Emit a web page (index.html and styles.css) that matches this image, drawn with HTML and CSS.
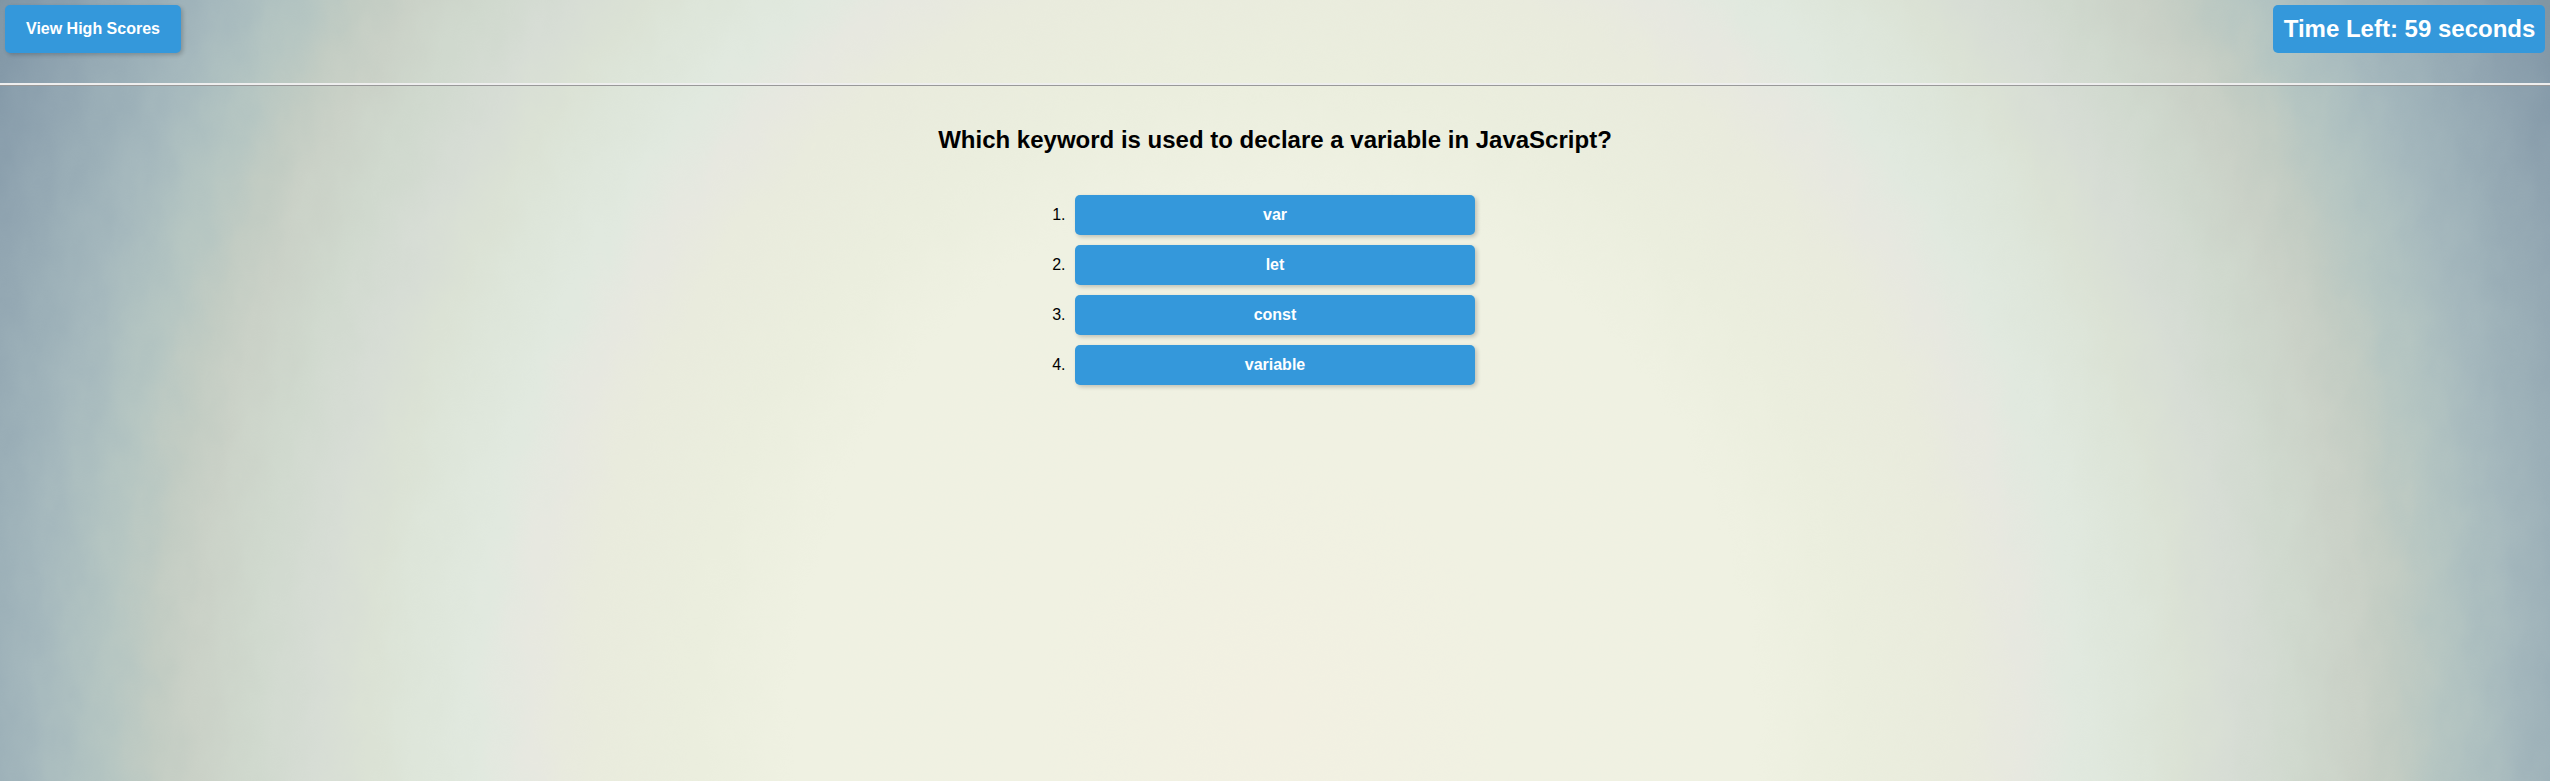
FILE: index.html
```html
<!DOCTYPE html>
<html lang="en">
<head>
<meta charset="utf-8">
<title>Code Quiz</title>
<link rel="stylesheet" href="styles.css">
</head>
<body>
<svg class="backdrop" width="2550" height="781" viewBox="0 0 2550 781" aria-hidden="true">
  <defs>
    <radialGradient id="vignette" gradientUnits="userSpaceOnUse" cx="0" cy="0" r="1450" gradientTransform="translate(1275 715) scale(1 1.1)">
      <stop offset="0" stop-color="#f2f0e2"/>
      <stop offset="0.17" stop-color="#f0f1e2"/>
      <stop offset="0.33" stop-color="#eff1e2"/>
      <stop offset="0.4" stop-color="#ebeede"/>
      <stop offset="0.476" stop-color="#e9ebdd"/>
      <stop offset="0.514" stop-color="#e7e8e0"/>
      <stop offset="0.552" stop-color="#e1e9df"/>
      <stop offset="0.6" stop-color="#dde5d9"/>
      <stop offset="0.624" stop-color="#dbe2d5"/>
      <stop offset="0.659" stop-color="#d7ddd5"/>
      <stop offset="0.703" stop-color="#d0d9ce"/>
      <stop offset="0.745" stop-color="#cad1c7"/>
      <stop offset="0.772" stop-color="#c2ccc3"/>
      <stop offset="0.803" stop-color="#b6c6c2"/>
      <stop offset="0.828" stop-color="#aec0c0"/>
      <stop offset="0.855" stop-color="#a5b8bd"/>
      <stop offset="0.886" stop-color="#9cb0b8"/>
      <stop offset="0.928" stop-color="#91a5b1"/>
      <stop offset="0.966" stop-color="#859aa9"/>
      <stop offset="1" stop-color="#7d929e"/>
    </radialGradient>
    <filter id="mottle" filterUnits="userSpaceOnUse" x="-100" y="-100" width="2750" height="981" color-interpolation-filters="sRGB">
      <feTurbulence type="fractalNoise" baseFrequency="0.035 0.02" numOctaves="3" seed="4" result="noise"/>
      <feDisplacementMap in="SourceGraphic" in2="noise" scale="36" xChannelSelector="R" yChannelSelector="G"/>
    </filter>
  </defs>
  <rect x="-100" y="-100" width="2750" height="981" fill="url(#vignette)" filter="url(#mottle)"/>
</svg>
<header class="topbar">
  <button class="btn scores">View High Scores</button>
  <div class="timer">Time Left: 59 seconds</div>
</header>
<main class="quiz">
  <h2 class="question">Which keyword is used to declare a variable in JavaScript?</h2>
  <div class="choices">
    <div class="choice"><span class="number">1.</span><button class="btn answer">var</button></div>
    <div class="choice"><span class="number">2.</span><button class="btn answer">let</button></div>
    <div class="choice"><span class="number">3.</span><button class="btn answer">const</button></div>
    <div class="choice"><span class="number">4.</span><button class="btn answer">variable</button></div>
  </div>
</main>
</body>
</html>
```
FILE: styles.css
```css
* { box-sizing: border-box; }

body {
  margin: 0;
  height: 781px;
  overflow: hidden;
  color: #000;
  background: #e9ebdd;
  font-family: "Liberation Sans", Arial, sans-serif;
  font-size: 16px;
}

.backdrop {
  position: absolute;
  top: 0;
  left: 0;
  z-index: -1;
}

.topbar {
  display: flex;
  justify-content: space-between;
  align-items: flex-start;
  height: 86px;
  padding: 5px;
  border-bottom: 1px solid #999;
  box-shadow: inset 0 -2px #eee;
}

.btn {
  border: 0;
  padding: 0;
  border-radius: 5px;
  background: #3498db;
  color: #fff;
  font: bold 16px "Liberation Sans", Arial, sans-serif;
  box-shadow: 2px 2px 4px rgba(0, 0, 0, 0.2);
}

.scores {
  width: 176px;
  height: 48px;
}

.timer {
  width: 272px;
  height: 48px;
  padding-left: 1px;
  border-radius: 5px;
  background: #3498db;
  color: #fff;
  font-size: 24px;
  font-weight: bold;
  line-height: 48px;
  text-align: center;
  white-space: nowrap;
}

.quiz {
  display: flex;
  flex-direction: column;
  align-items: center;
  padding-top: 40px;
}

.question {
  margin: 0 0 42px;
  font-size: 24px;
  line-height: 27px;
}

.choices {
  display: grid;
  gap: 10px;
  width: 448px;
  margin-right: 48px;
}

.choice {
  display: flex;
  justify-content: flex-end;
  align-items: center;
}

.number {
  padding-right: 9.5px;
}

.answer {
  width: 400px;
  height: 40px;
}
```
